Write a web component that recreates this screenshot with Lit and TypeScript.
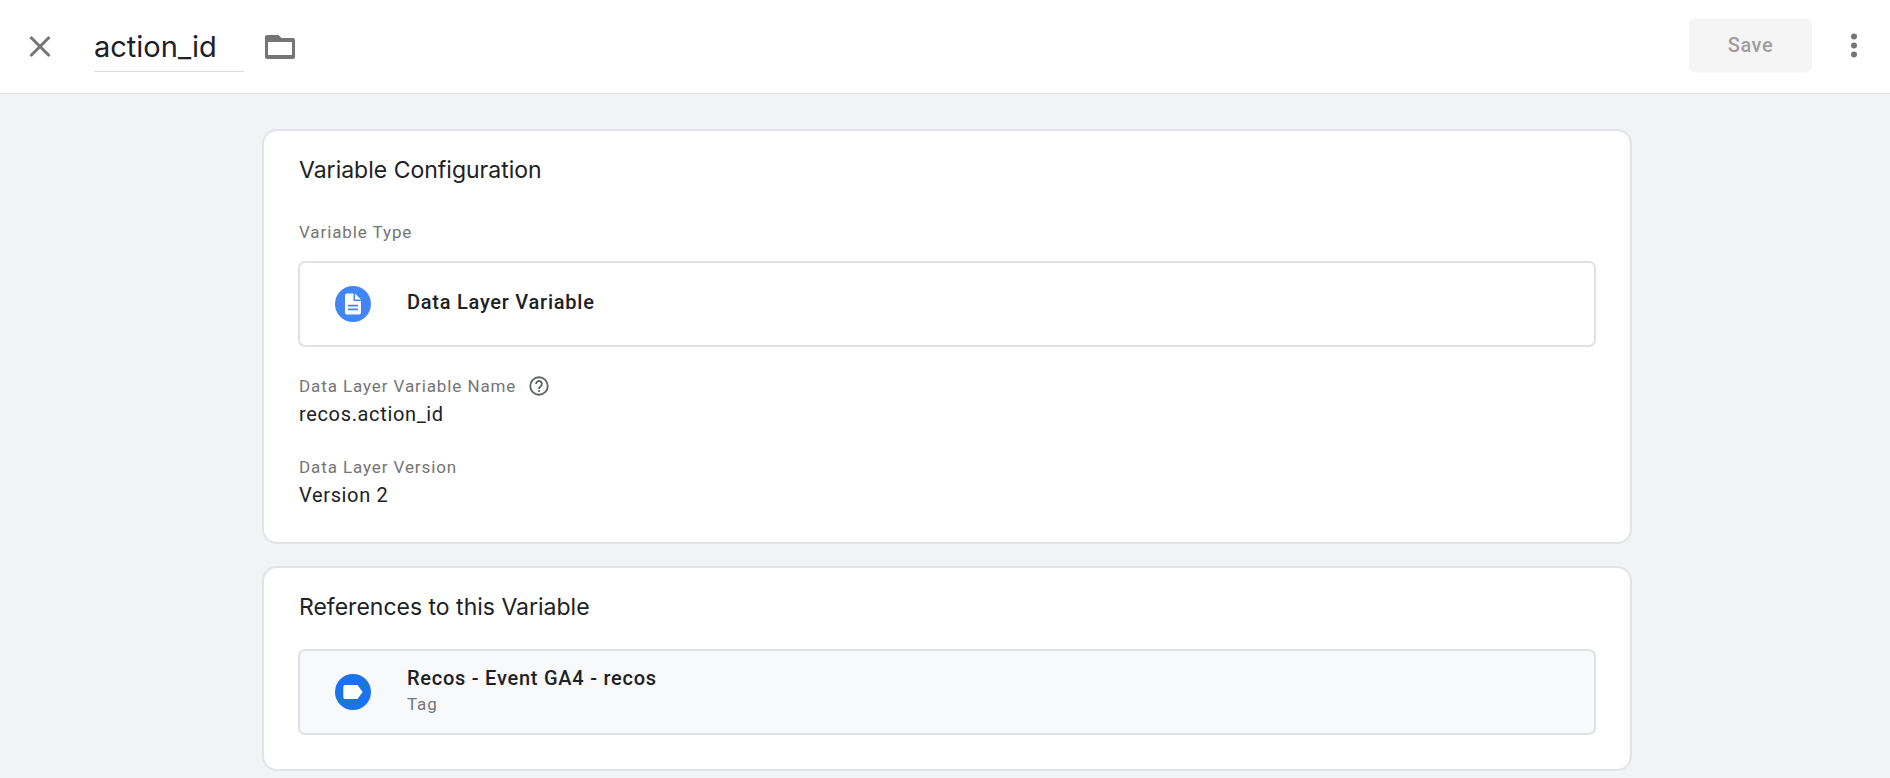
import { LitElement, html, css } from "lit";
import { customElement } from "lit/decorators.js";

@customElement("app-root")
export class AppRoot extends LitElement {
  static styles = css`
    :host { display: block; height: 778px; overflow: hidden; background: #f1f3f4; font-family: Roboto, sans-serif; color: #202124; }
    .bar { height: 94px; box-sizing: border-box; background: #fff; border-bottom: 1px solid #dadce0; display: flex; align-items: center; }
    .close { width: 24px; height: 24px; margin: 0 0 0 28px; display: block; transform: translateY(-.5px); }
    .name { margin: 23px 0 0 42px; align-self: flex-start; width: 150px; height: 49px; box-sizing: border-box; border-bottom: 1px solid #dadce0; font: 400 29px/48px Inter, sans-serif; letter-spacing: 0; }
    .folder { width: 36px; height: 36px; margin-left: 18px; display: block; }
    .spacer { flex: 1; }
    .save { width: 123px; height: 54px; background: #f5f5f5; border-radius: 6px; color: #9e9e9e; font: 500 20px/52px Roboto, sans-serif; text-align: center; letter-spacing: .5px; transform: translateY(-1.5px); }
    .more { width: 6px; margin: 0 33px 0 39px; display: flex; flex-direction: column; gap: 3px; transform: translateY(-1.500px); }
    .more i { width: 6px; height: 6px; border-radius: 50%; background: #757575; }
    .main { width: 1370px; margin: 35px 0 0 262px; display: flex; flex-direction: column; gap: 22px; }
    .card { background: #fff; border: 2px solid #e1e3e6; border-radius: 15px; box-sizing: border-box; padding: 0 34px; }
    .c1 { height: 415px; }
    .c2 { height: 205px; }
    h2 { margin: 0 0 0 1px; font: 400 23px/30px Inter, sans-serif; }
    .c1 h2 { padding-top: 24px; }
    .c2 h2 { padding-top: 24px; }
    .label { margin-left: 1px; color: #757575; font-size: 17px; line-height: 22px; letter-spacing: .9px; display: flex; align-items: center; gap: 13px; }
    .value { margin: 4px 0 0 1px; font-size: 20px; line-height: 26px; letter-spacing: .65px; }
    .row { height: 86px; box-sizing: border-box; border: 2px solid #dfe1e5; border-radius: 7px; display: flex; align-items: center; padding-left: 35px; gap: 36px; }
    .row svg { width: 36px; height: 36px; flex: none; }
    .tx { margin-bottom: 4px; }
    .row b { display: block; font-weight: 500; font-size: 20px; line-height: 24px; letter-spacing: .75px; }
    .row small { display: block; margin-top: 3px; color: #757575; font-size: 17px; line-height: 22px; letter-spacing: .9px; }
    .grey { background: #f8f9fa; }
    .t { margin-top: 36px; }
    .r1 { margin-top: 18px; }
    .f1 { margin-top: 28px; }
    .f2 { margin-top: 29px; }
    .r2 { margin-top: 27px; }
    .help { width: 20px; height: 20px; display: block; }
  `;

  render() {
    return html`
      <div class="bar">
        <svg class="close" viewBox="0 0 24 24"><path fill="none" stroke="#757575" stroke-width="3" d="M2.500 2.500 21.500 21.500M21.500 2.500 2.500 21.500"/></svg>
        <div class="name">action_id</div>
        <svg class="folder" viewBox="0 0 36 36"><path fill="#757575" fill-rule="evenodd" d="M5 6h11.500l3 3H31a2 2 0 0 1 2 2v17a2 2 0 0 1-2 2H5a2 2 0 0 1-2-2V8a2 2 0 0 1 2-2Zm1 7v13h24V13H6Z"/></svg>
        <div class="spacer"></div>
        <div class="save">Save</div>
        <div class="more"><i></i><i></i><i></i></div>
      </div>
      <div class="main">
        <section class="card c1">
          <h2>Variable Configuration</h2>
          <div class="label t">Variable Type</div>
          <div class="row r1">
            <svg viewBox="0 0 36 36"><circle cx="18" cy="18" r="18" fill="#4285f4"/><path fill="#fff" d="M12 7.500h6.500v7.500H26v11.500a2 2 0 0 1-2 2H12a2 2 0 0 1-2-2v-17a2 2 0 0 1 2-2Z"/><path fill="#fff" d="M20 7.500l6 6h-6Z"/><path fill="#4285f4" d="M13 18.800h10v1.800H13ZM13 22.400h10v1.800H13Z"/></svg>
            <div class="tx"><b>Data Layer Variable</b></div>
          </div>
          <div class="label f1">Data Layer Variable Name
            <svg class="help" viewBox="0 0 24 24"><circle cx="12" cy="12" r="10.500" fill="none" stroke="#5f6368" stroke-width="2.200"/><path fill="none" stroke="#5f6368" stroke-width="2.200" d="M8.500 9.500a3.500 3.500 0 1 1 5.500 2.900c-1.300.9-2 1.500-2 3.100"/><circle cx="12" cy="18" r="1.300" fill="#5f6368"/></svg>
          </div>
          <div class="value">recos.action_id</div>
          <div class="label f2">Data Layer Version</div>
          <div class="value">Version 2</div>
        </section>
        <section class="card c2">
          <h2>References to this Variable</h2>
          <div class="row grey r2">
            <svg viewBox="0 0 36 36"><circle cx="18" cy="18" r="18" fill="#1a73e8"/><path fill="#fff" d="M10.300 11h12.200l5.200 7-5.200 7H10.300a2 2 0 0 1-2-2V13a2 2 0 0 1 2-2Z"/></svg>
            <div class="tx"><b>Recos - Event GA4 - recos</b><small>Tag</small></div>
          </div>
        </section>
      </div>
    `;
  }
}
